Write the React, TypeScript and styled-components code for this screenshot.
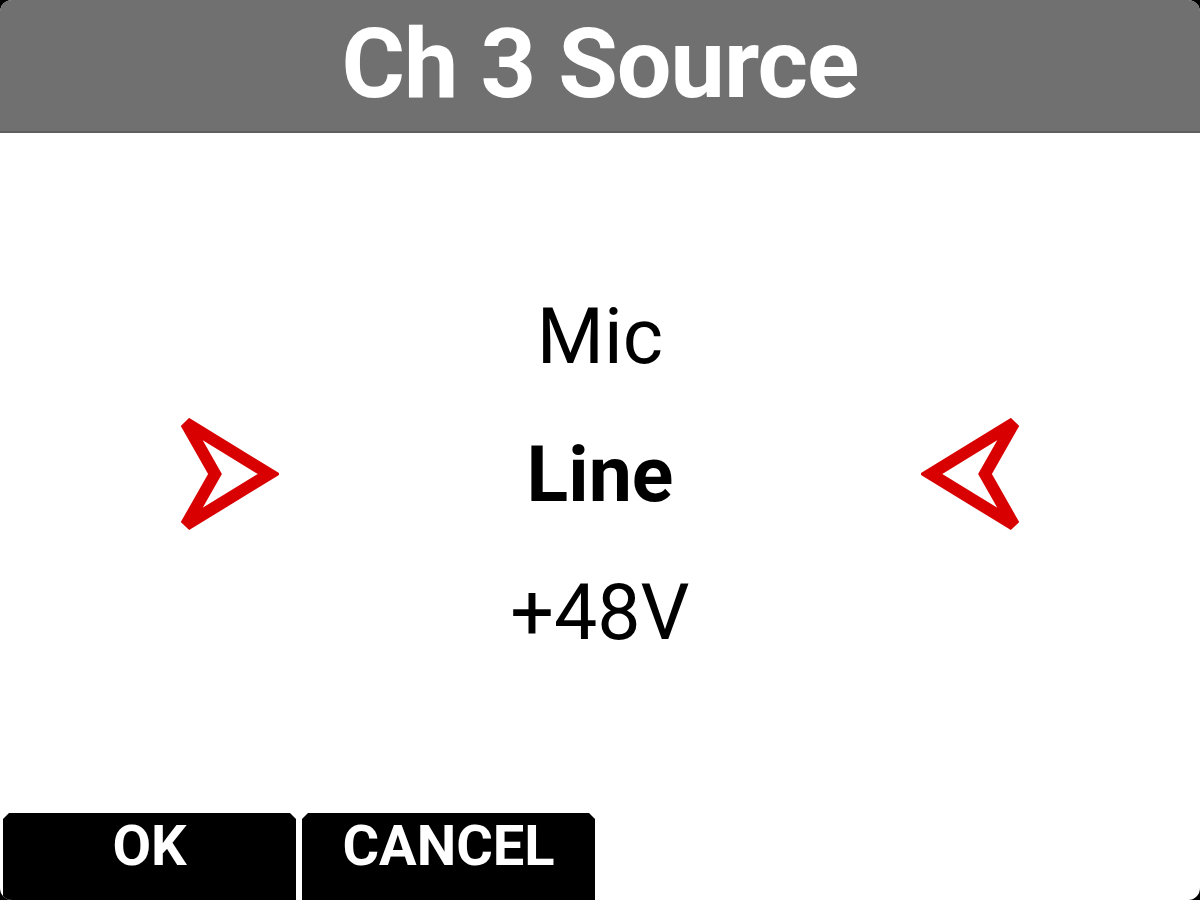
import styled, { createGlobalStyle } from "styled-components";

const Global = createGlobalStyle`
  html, body {
    margin: 0;
    padding: 0;
    background: #000;
  }
  body {
    font-family: Roboto, "Liberation Sans", sans-serif;
  }
`;

const S = {
  Screen: styled.div`
    width: 1200px;
    height: 900px;
    background: #fff;
    border-radius: 12px;
    overflow: hidden;
    display: flex;
    flex-direction: column;
  `,
  Header: styled.header`
    height: 133px;
    flex-shrink: 0;
    background: #707070;
    border-bottom: 2px solid #5e5e5e;
    display: flex;
    align-items: center;
    justify-content: center;
    color: #fff;
    font-size: 97px;
    font-weight: 700;
    letter-spacing: -1px;
    padding-bottom: 4px;
    box-sizing: border-box;
  `,
  Body: styled.main`
    flex: 1;
    display: flex;
    align-items: center;
    justify-content: center;
    padding-top: 4px;
  `,
  Arrow: styled.svg`
    width: 100px;
    height: 114px;
    flex-shrink: 0;
    display: block;
  `,
  Options: styled.ul`
    width: 642px;
    margin: 0;
    padding: 0;
    list-style: none;
    text-align: center;
  `,
  Option: styled.li<{ $selected?: boolean }>`
    font-size: 77px;
    line-height: 138px;
    color: #000;
    font-weight: ${(p) => (p.$selected ? 700 : 400)};
  `,
  Footer: styled.footer`
    height: 87px;
    flex-shrink: 0;
    display: flex;
    gap: 6px;
    padding-left: 3px;
  `,
  SoftKey: styled.button`
    width: 293px;
    height: 100%;
    border: none;
    margin: 0;
    padding: 0 0 22px;
    background: #000;
    color: #fff;
    font-family: Roboto, "Liberation Sans", sans-serif;
    font-size: 56px;
    font-weight: 700;
    display: flex;
    align-items: center;
    justify-content: center;
    clip-path: polygon(6px 0, calc(100% - 6px) 0, 100% 6px, 100% 100%, 0 100%, 0 6px);
  `,
};

const RED = "#d80000";

const ArrowRight = () => (
  <S.Arrow viewBox="0 0 100 114">
    <polygon
      points="7,5 90,56 7,107 36,56"
      fill="none"
      stroke={RED}
      strokeWidth={12}
      strokeLinejoin="miter"
      strokeMiterlimit={4}
    />
  </S.Arrow>
);

const ArrowLeft = () => (
  <S.Arrow viewBox="0 0 100 114">
    <polygon
      points="93,5 10,56 93,107 64,56"
      fill="none"
      stroke={RED}
      strokeWidth={12}
      strokeLinejoin="miter"
      strokeMiterlimit={4}
    />
  </S.Arrow>
);

const options = [
  { label: "Mic" },
  { label: "Line", selected: true },
  { label: "+48V" },
];

export default function App() {
  return (
    <>
      <Global />
      <S.Screen>
        <S.Header>Ch 3 Source</S.Header>
        <S.Body>
          <ArrowRight />
          <S.Options>
            {options.map((o) => (
              <S.Option key={o.label} $selected={o.selected}>
                {o.label}
              </S.Option>
            ))}
          </S.Options>
          <ArrowLeft />
        </S.Body>
        <S.Footer>
          <S.SoftKey>OK</S.SoftKey>
          <S.SoftKey>CANCEL</S.SoftKey>
        </S.Footer>
      </S.Screen>
    </>
  );
}
